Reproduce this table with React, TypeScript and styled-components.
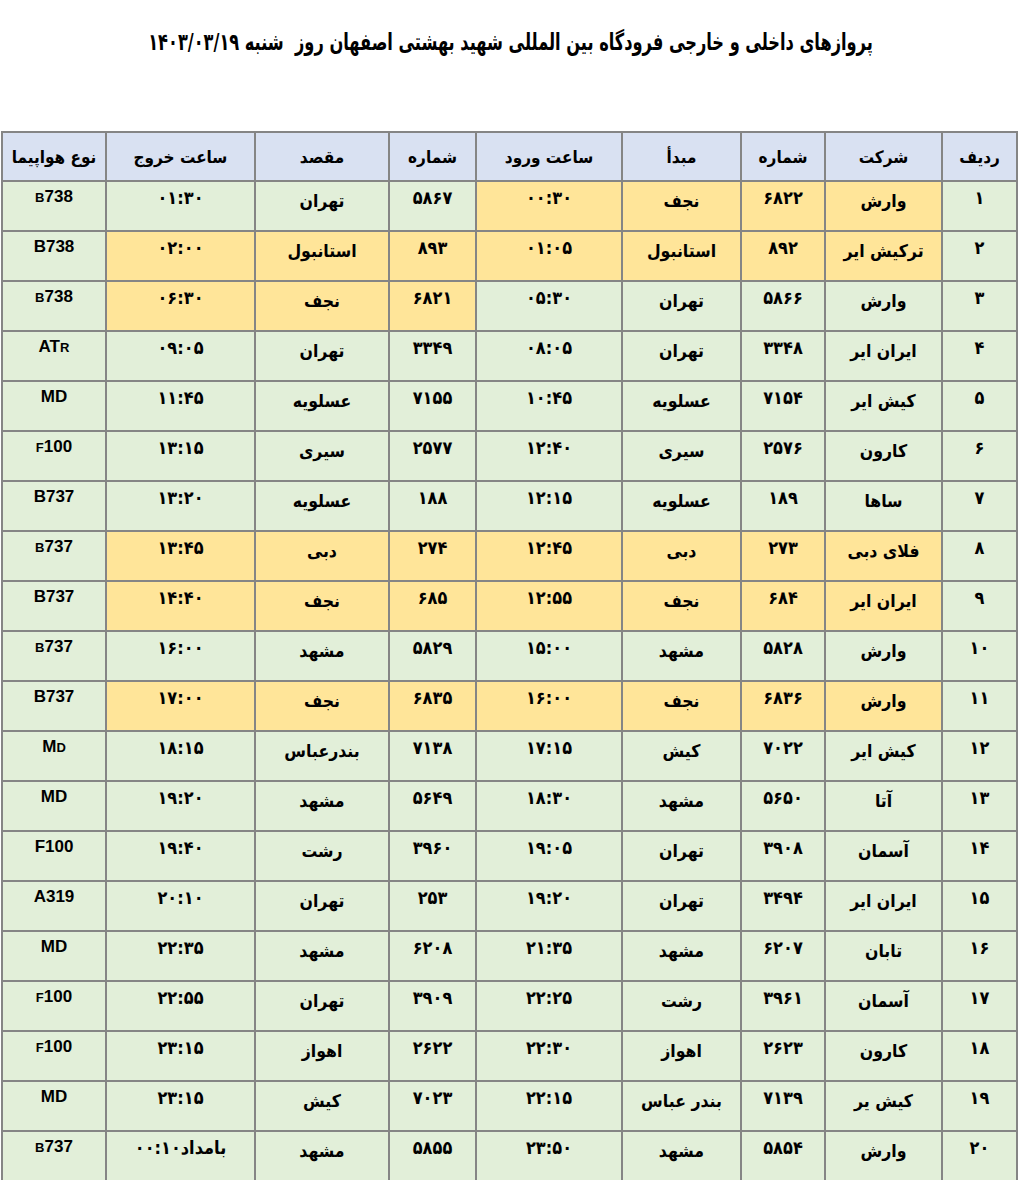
import React from 'react';
import styled, { createGlobalStyle } from 'styled-components';

const GlobalStyle = createGlobalStyle`
  html, body {
    margin: 0;
    padding: 0;
    background: #ffffff;
  }
`;

const Page = styled.div`
  width: 1020px;
  padding: 0 2px 0 3px;
  box-sizing: border-box;
  direction: rtl;
  font-family: 'DejaVu Sans', 'Noto Sans', sans-serif;
  color: #000;
`;

const Title = styled.h1`
  margin: 0;
  height: 131px;
  padding-top: 31px;
  box-sizing: border-box;
  text-align: center;
  font-family: 'DejaVu Sans Condensed', 'DejaVu Sans', sans-serif;
  font-size: 18px;
  font-weight: 700;
`;

const TitleText = styled.span`
  display: inline-block;
  transform: scaleY(1.3);
`;

const Table = styled.table`
  width: 1015px;
  border-collapse: collapse;
  table-layout: fixed;
`;

const HeadCell = styled.th`
  height: 47px;
  padding: 0;
  background: #d9e1f2;
  border: 2px solid #858585;
  font-family: 'DejaVu Sans Condensed', 'DejaVu Sans', sans-serif;
  font-size: 17px;
  font-weight: 700;
  vertical-align: middle;
  text-align: center;
`;

const Cell = styled.td<{ $hot?: boolean }>`
  height: 50px;
  padding: 5px 2px 0;
  box-sizing: border-box;
  background: ${(p) => (p.$hot ? '#ffe599' : '#e2efd9')};
  border: 2px solid #858585;
  font-weight: 700;
  vertical-align: top;
  text-align: center;
  white-space: nowrap;
`;

const Word = styled.span`
  display: inline-block;
  padding-top: 4px;
  font-family: 'DejaVu Sans Condensed', 'DejaVu Sans', sans-serif;
  font-size: 17.5px;
`;

const Digits = styled.span`
  display: inline-block;
  font-family: 'DejaVu Sans Condensed', 'DejaVu Sans', sans-serif;
  font-size: 18px;
`;

const Plane = styled.span`
  direction: ltr;
  display: inline-block;
  margin-top: -3px;
  font-family: 'Liberation Sans', Arial, sans-serif;
  font-size: 17px;
  font-weight: 700;
`;

const Small = styled.span`
  font-size: 13px;
`;

const widths = [75, 117, 84, 119, 146, 87, 134, 149, 104];

const heads = [
  'ردیف',
  'شرکت',
  'شماره',
  'مبدأ',
  'ساعت ورود',
  'شماره',
  'مقصد',
  'ساعت خروج',
  'نوع هواپیما',
];

// columns: row, airline, in-no, from, in-time, out-no, to, out-time, plane
// hot = indexes of highlighted cells
type Flight = { cells: string[]; hot: number[] };

const ALL = [1, 2, 3, 4, 5, 6, 7];

const flights: Flight[] = [
  { cells: ['۱', 'وارش', '۶۸۲۲', 'نجف', '۰۰:۳۰', '۵۸۶۷', 'تهران', '۰۱:۳۰', '{B}738'], hot: [1, 2, 3, 4] },
  { cells: ['۲', 'ترکیش ایر', '۸۹۲', 'استانبول', '۰۱:۰۵', '۸۹۳', 'استانبول', '۰۲:۰۰', 'B738'], hot: ALL },
  { cells: ['۳', 'وارش', '۵۸۶۶', 'تهران', '۰۵:۳۰', '۶۸۲۱', 'نجف', '۰۶:۳۰', '{B}738'], hot: [5, 6, 7] },
  { cells: ['۴', 'ایران ایر', '۳۳۴۸', 'تهران', '۰۸:۰۵', '۳۳۴۹', 'تهران', '۰۹:۰۵', 'AT{R}'], hot: [] },
  { cells: ['۵', 'کیش ایر', '۷۱۵۴', 'عسلویه', '۱۰:۴۵', '۷۱۵۵', 'عسلویه', '۱۱:۴۵', 'MD'], hot: [] },
  { cells: ['۶', 'کارون', '۲۵۷۶', 'سیری', '۱۲:۴۰', '۲۵۷۷', 'سیری', '۱۳:۱۵', '{F}100'], hot: [] },
  { cells: ['۷', 'ساها', '۱۸۹', 'عسلویه', '۱۲:۱۵', '۱۸۸', 'عسلویه', '۱۳:۲۰', 'B737'], hot: [] },
  { cells: ['۸', 'فلای دبی', '۲۷۳', 'دبی', '۱۲:۴۵', '۲۷۴', 'دبی', '۱۳:۴۵', '{B}737'], hot: ALL },
  { cells: ['۹', 'ایران ایر', '۶۸۴', 'نجف', '۱۲:۵۵', '۶۸۵', 'نجف', '۱۴:۴۰', 'B737'], hot: ALL },
  { cells: ['۱۰', 'وارش', '۵۸۲۸', 'مشهد', '۱۵:۰۰', '۵۸۲۹', 'مشهد', '۱۶:۰۰', '{B}737'], hot: [] },
  { cells: ['۱۱', 'وارش', '۶۸۳۶', 'نجف', '۱۶:۰۰', '۶۸۳۵', 'نجف', '۱۷:۰۰', 'B737'], hot: ALL },
  { cells: ['۱۲', 'کیش ایر', '۷۰۲۲', 'کیش', '۱۷:۱۵', '۷۱۳۸', 'بندرعباس', '۱۸:۱۵', 'M{D}'], hot: [] },
  { cells: ['۱۳', 'آتا', '۵۶۵۰', 'مشهد', '۱۸:۳۰', '۵۶۴۹', 'مشهد', '۱۹:۲۰', 'MD'], hot: [] },
  { cells: ['۱۴', 'آسمان', '۳۹۰۸', 'تهران', '۱۹:۰۵', '۳۹۶۰', 'رشت', '۱۹:۴۰', 'F100'], hot: [] },
  { cells: ['۱۵', 'ایران ایر', '۳۴۹۴', 'تهران', '۱۹:۲۰', '۲۵۳', 'تهران', '۲۰:۱۰', 'A319'], hot: [] },
  { cells: ['۱۶', 'تابان', '۶۲۰۷', 'مشهد', '۲۱:۳۵', '۶۲۰۸', 'مشهد', '۲۲:۳۵', 'MD'], hot: [] },
  { cells: ['۱۷', 'آسمان', '۳۹۶۱', 'رشت', '۲۲:۲۵', '۳۹۰۹', 'تهران', '۲۲:۵۵', '{F}100'], hot: [] },
  { cells: ['۱۸', 'کارون', '۲۶۲۳', 'اهواز', '۲۲:۳۰', '۲۶۲۲', 'اهواز', '۲۳:۱۵', '{F}100'], hot: [] },
  { cells: ['۱۹', 'کیش یر', '۷۱۳۹', 'بندر عباس', '۲۲:۱۵', '۷۰۲۳', 'کیش', '۲۳:۱۵', 'MD'], hot: [] },
  { cells: ['۲۰', 'وارش', '۵۸۵۴', 'مشهد', '۲۳:۵۰', '۵۸۵۵', 'مشهد', '۰۰:۱۰بامداد', '{B}737'], hot: [] },
];

const wordCols = [1, 3, 6];

const renderPlane = (code: string) =>
  code.split(/(\{[^}]+\})/).map((part, i) =>
    part.startsWith('{') ? <Small key={i}>{part.slice(1, -1)}</Small> : part
  );

const App = () => {
  return (
    <>
      <GlobalStyle />
      <Page>
        <Title>
          <TitleText>
            پروازهای داخلی و خارجی فرودگاه بین المللی شهید بهشتی اصفهان روز&nbsp; شنبه ۱۴۰۳/۰۳/۱۹
          </TitleText>
        </Title>
        <Table>
          <colgroup>
            {widths.map((w, i) => (
              <col key={i} style={{ width: w }} />
            ))}
          </colgroup>
          <thead>
            <tr>
              {heads.map((h, i) => (
                <HeadCell key={i}>{h}</HeadCell>
              ))}
            </tr>
          </thead>
          <tbody>
            {flights.map((f) => (
              <tr key={f.cells[0]}>
                {f.cells.map((c, i) => (
                  <Cell key={i} $hot={f.hot.includes(i)}>
                    {i === 8 ? (
                      <Plane>{renderPlane(c)}</Plane>
                    ) : wordCols.includes(i) ? (
                      <Word>{c}</Word>
                    ) : (
                      <Digits dir="ltr">{c}</Digits>
                    )}
                  </Cell>
                ))}
              </tr>
            ))}
          </tbody>
        </Table>
      </Page>
    </>
  );
};

export default App;
